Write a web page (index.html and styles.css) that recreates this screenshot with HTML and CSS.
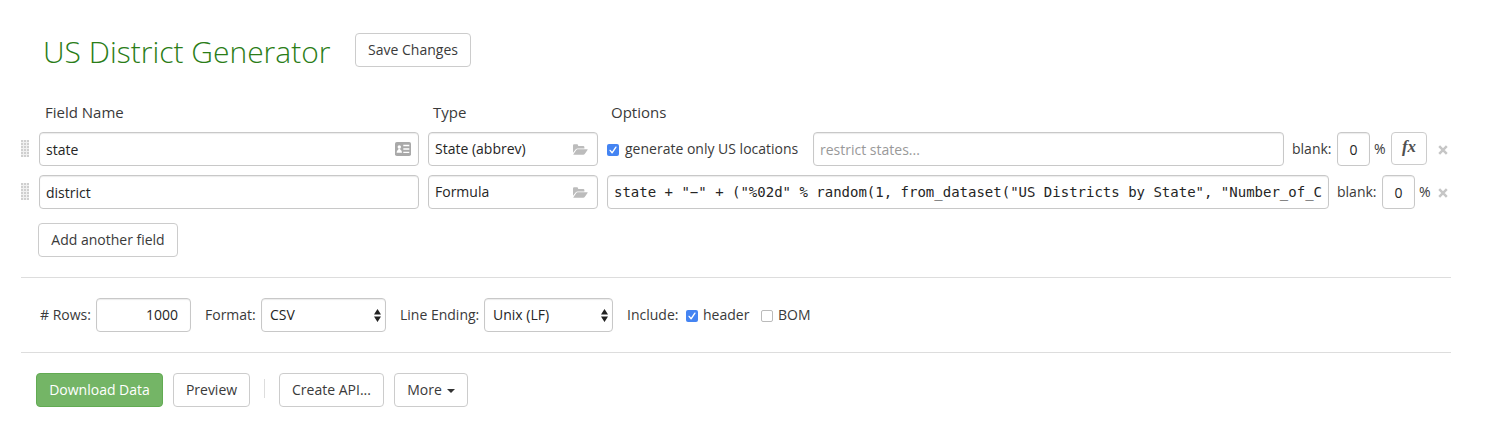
FILE: index.html
```html
<!DOCTYPE html>
<html lang="en">
<head>
<meta charset="utf-8">
<title>US District Generator</title>
<link rel="stylesheet" href="styles.css">
</head>
<body>
<svg class="defs" width="0" height="0">
  <symbol id="folder" viewBox="0 0 15 12"><path d="M0 1.4Q0 .3 1.1.3H4.2Q5.2.3 5.2 1.9H10.2Q11.4 1.9 11.4 3.2V4.4H4.6Q3.5 4.4 2.8 5.2L0 8.7Z"/><path d="M4.6 5.2H14.2Q15.1 5.2 14.5 6L11.9 9.8Q11.3 10.8 10.2 10.8H.8Q0 10.8.6 9.9L3.1 6.2Q3.6 5.2 4.6 5.2Z"/></symbol>
  <symbol id="cross" viewBox="0 0 10 10"><path d="M1.2 1.2L8.8 8.8M8.8 1.2L1.2 8.8" stroke="currentColor" stroke-width="2.5"/></symbol>
  <symbol id="tick" viewBox="0 0 12 12"><path d="M3.1 6.4L5.1 8.8L8.9 3.2" fill="none" stroke="#fff" stroke-width="1.4" stroke-linecap="round" stroke-linejoin="round"/></symbol>
  <symbol id="arrows" viewBox="0 0 7 13"><path d="M3.5 0L7 5.5H0ZM3.5 13L0 7.5H7Z"/></symbol>
</svg>
<main class="page">
  <header class="top">
    <h1 class="title">US District Generator</h1>
    <button class="btn save">Save Changes</button>
  </header>
  <div class="columns">
    <span class="col-name">Field Name</span><span class="col-type">Type</span><span>Options</span>
  </div>
  <div class="row">
    <span class="grip"></span>
    <div class="box name"><span>state</span>
      <svg class="card" viewBox="0 0 16 14"><rect width="16" height="14" rx="1.8" fill="#a9a9a9"/><circle cx="4.3" cy="4.9" r="1.7" fill="#fff"/><path d="M1.6 10.7Q1.6 8.3 3.3 7.7V6.5H5.3V7.7Q7 8.3 7 10.7Z" fill="#fff"/><path d="M8.3 3.5H14.3M8.3 7H14.3M8.3 10.3H14.3" stroke="#fff" stroke-width="1.3"/></svg>
    </div>
    <div class="box type"><span>State (abbrev)</span><svg class="folder"><use href="#folder"/></svg></div>
    <label class="only"><span class="check on"><svg><use href="#tick"/></svg></span><span>generate only US locations</span></label>
    <div class="box restrict">restrict states...</div>
    <span class="blank">blank:</span><div class="box num">0</div><span class="pct">%</span>
    <button class="fx">fx</button>
    <svg class="cross"><use href="#cross"/></svg>
  </div>
  <div class="row">
    <span class="grip"></span>
    <div class="box name"><span>district</span></div>
    <div class="box type"><span>Formula</span><svg class="folder"><use href="#folder"/></svg></div>
    <div class="box formula">state + "−" + ("%02d" % random(1, from_dataset("US Districts by State", "Number_of_C</div>
    <span class="blank">blank:</span><div class="box num">0</div><span class="pct">%</span>
    <svg class="cross"><use href="#cross"/></svg>
  </div>
  <button class="btn add">Add another field</button>
  <section class="settings">
    <span class="lab-rows"># Rows:</span><div class="box count">1000</div>
    <span class="lab-format">Format:</span><div class="box select format"><span>CSV</span><svg class="arrows"><use href="#arrows"/></svg></div>
    <span class="lab-ending">Line Ending:</span><div class="box select ending"><span>Unix (LF)</span><svg class="arrows"><use href="#arrows"/></svg></div>
    <span class="lab-include">Include:</span>
    <label class="header-opt"><span class="check on"><svg><use href="#tick"/></svg></span><span>header</span></label>
    <label class="bom-opt"><span class="check"></span><span>BOM</span></label>
  </section>
  <footer class="actions">
    <button class="btn download">Download Data</button>
    <button class="btn preview">Preview</button>
    <span class="divider"></span>
    <button class="btn api">Create API...</button>
    <button class="btn more">More<span class="caret"></span></button>
  </footer>
</main>
</body>
</html>
```
FILE: styles.css
```css
* { box-sizing: border-box; }
body { margin: 0; background: #fff; color: #3a3a3a; font: 14px/20px "Open Sans", sans-serif; overflow: hidden; }
button { font: inherit; color: inherit; padding: 0; margin: 0; }
.defs { display: block; height: 0; }
.page { width: 1430px; margin-left: 21px; padding-top: 33px; }
.top { display: flex; height: 34px; padding-left: 22px; }
.title { width: 312px; margin: 0; font-size: 30px; font-weight: 300; line-height: 38px; color: #2b7d17; white-space: nowrap; }
.btn { display: flex; align-items: center; justify-content: center; height: 34px; border: 1px solid #ccc; border-radius: 4px; background: #fff; white-space: nowrap; }
.save { width: 116px; }
.columns { display: flex; height: 20px; margin: 35px 0 10px; padding-left: 24px; font-size: 15px; }
.col-name { width: 388px; }
.col-type { width: 178px; }
.row { display: flex; align-items: center; height: 34px; margin-bottom: 9px; white-space: nowrap; }
.grip { flex: none; width: 8px; height: 17px; margin: -1px 10px 0 0; background-color: #cfcfcf; background-image: linear-gradient(90deg, transparent 2px, #f0f0f0 2px), linear-gradient(transparent 2px, #f0f0f0 2px); background-size: 3px 3px; }
.box { flex: none; display: flex; align-items: center; height: 34px; border: 1px solid #c8c8c8; border-radius: 4px; background: #fff; box-shadow: inset 0 1px 1px rgba(0,0,0,.08); color: #252525; }
.name { width: 380px; margin-right: 9px; padding: 2px 7px 0 6px; justify-content: space-between; }
.card { width: 16px; height: 14px; margin-top: -3px; }
.type { width: 170px; margin-right: 9px; padding: 0 9px 0 6px; justify-content: space-between; }
.folder { width: 15px; height: 12px; fill: #bcbcbc; margin-top: 2px; }
.only { display: flex; align-items: center; width: 206px; }
.check { width: 12px; height: 12px; margin-top: 2px; margin-right: 6px; border: 1px solid #bbb; border-radius: 2px; background: #fff; }
.check.on { border: 0; background: #4484f2; }
.check svg { display: block; width: 12px; height: 12px; }
.restrict { width: 471px; padding: 2px 6px 0; color: #999; }
.blank { width: 45px; margin-left: 8px; }
.num { width: 33px; padding-top: 2px; justify-content: center; }
.pct { width: 21px; padding-left: 4px; }
.fx { flex: none; width: 36px; height: 33px; margin-top: -1px; border: 1px solid #ccc; border-radius: 4px; background: #fff; color: #505050; font: italic bold 17px/26px "Liberation Serif", serif; padding-bottom: 3px; }
.cross { width: 10px; height: 10px; margin-left: auto; margin-right: 3px; margin-top: 2px; color: #c6c6c6; }
.formula { width: 722px; padding: 0 6px; font: 14px/20px "DejaVu Sans Mono", monospace; white-space: pre; overflow: hidden; }
.add { width: 140px; margin: 14px 0 0 17px; }
.settings { display: flex; align-items: center; height: 76px; margin-top: 20px; padding-left: 19px; border-top: 1px solid #ddd; border-bottom: 1px solid #ddd; white-space: nowrap; }
.lab-rows { width: 56px; }
.count { width: 95px; margin-right: 14px; padding-right: 12px; justify-content: flex-end; }
.lab-format { width: 56px; }
.select { padding: 0 4px 0 8px; justify-content: space-between; }
.format { width: 125px; margin-right: 14px; }
.arrows { width: 7px; height: 13px; fill: #222; }
.lab-ending { width: 84px; }
.ending { width: 129px; margin-right: 14px; }
.lab-include { width: 59px; }
.settings label { display: flex; align-items: center; }
.settings .check { margin-right: 5px; }
.header-opt { width: 75px; }
.actions { display: flex; align-items: center; margin-top: 20px; padding-left: 15px; }
.download { width: 127px; background: #74b566; border-color: #62ab53; color: #fff; }
.preview { width: 77px; margin-left: 10px; }
.divider { width: 1px; height: 19px; margin: -3px 14px 0; background: #ddd; }
.api { width: 105px; }
.more { width: 74px; margin-left: 10px; }
.caret { margin: 2px 0 0 5px; border: 4px solid transparent; border-top-color: #333; border-bottom: 0; }
```
